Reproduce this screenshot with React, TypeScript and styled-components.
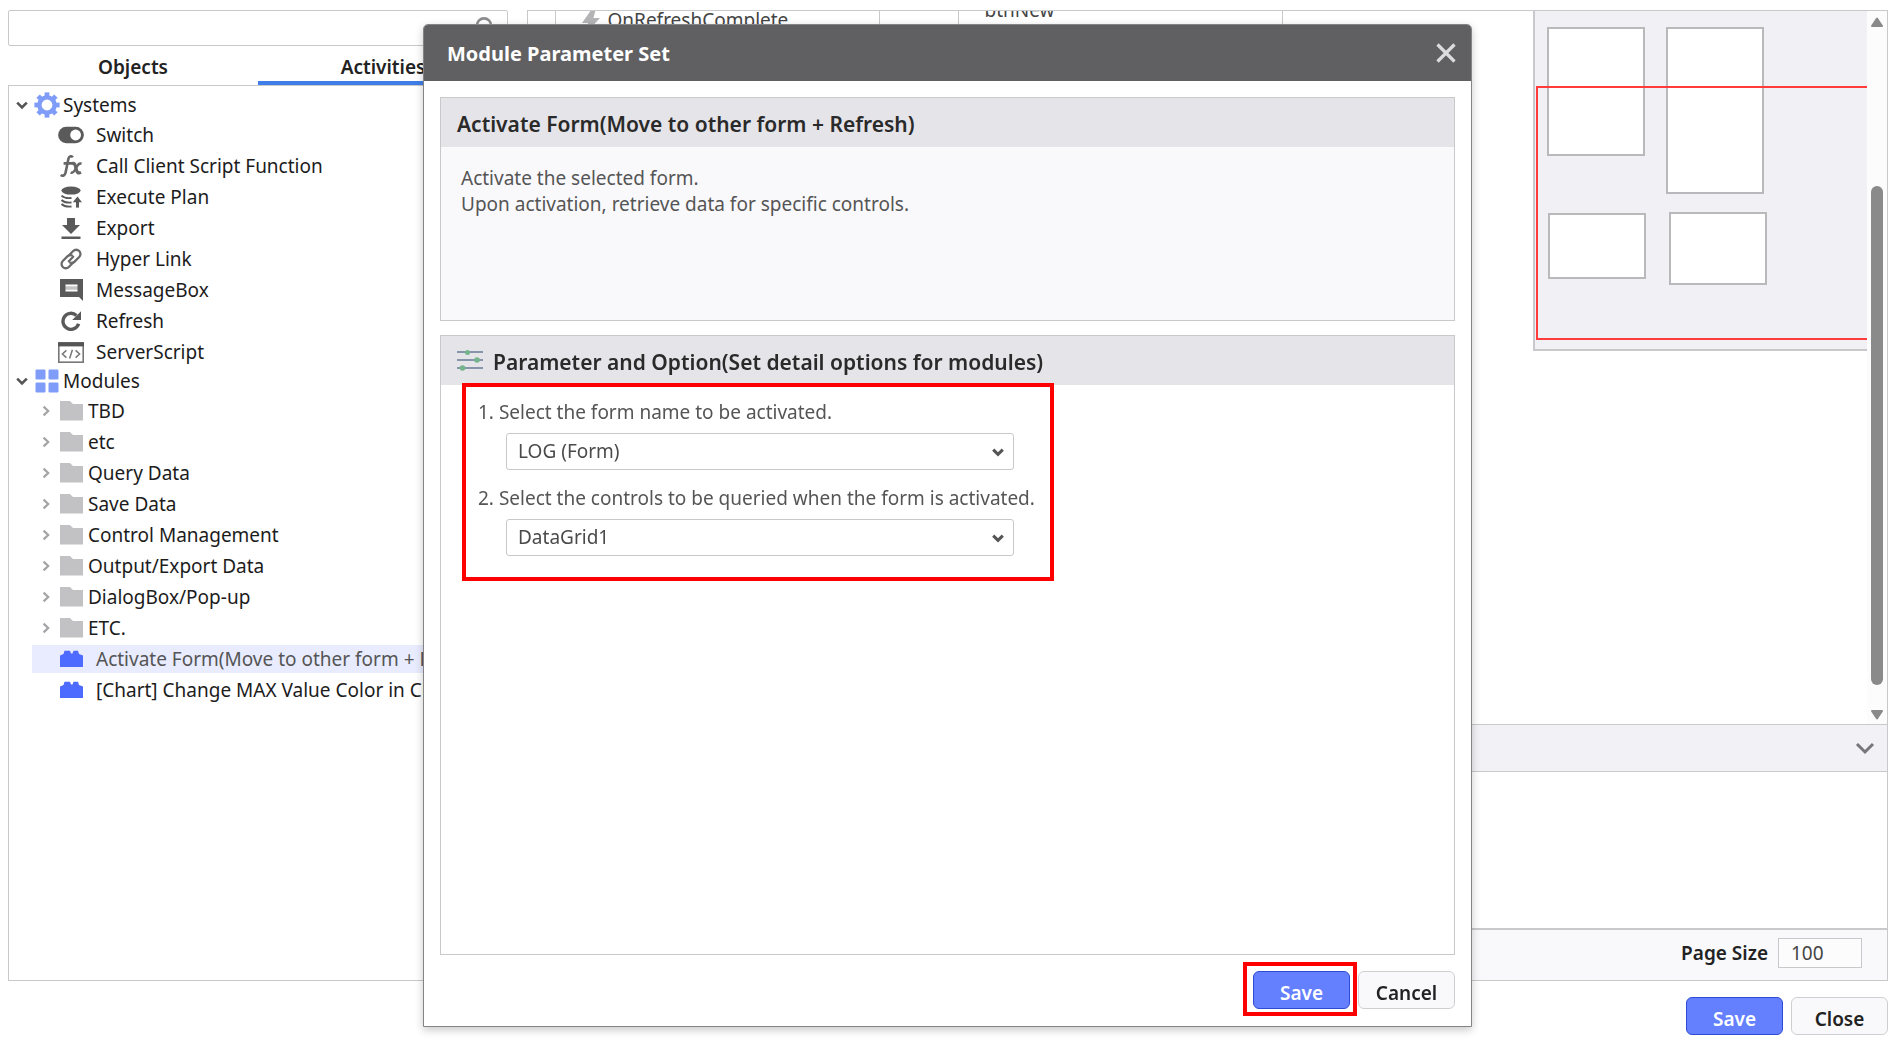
import React, { useState } from 'react';
import styled, { createGlobalStyle } from 'styled-components';

const GlobalStyle = createGlobalStyle`
  *, *::before, *::after { box-sizing: border-box; }
  html, body, #root { height: 100%; }
  body { margin: 0; background: #fff; color: #222; overflow: hidden; }
  body, button, input, select {
    font-family: "Noto Sans", "Noto Sans CJK KR", sans-serif;
    font-size: 19px;
    line-height: 28px;
  }
  button { border: 0; background: none; padding: 0; color: inherit; cursor: pointer; }
  ul { list-style: none; margin: 0; padding: 0; }
  h1, h2, p { margin: 0; }
`;

const line = '#c9c9cb';

/* ---------- page frame ---------- */

const Page = styled.div`
  height: 100vh;
  min-height: 700px;
  padding: 10px 6px 12px 8px;
  display: flex;
  flex-direction: column;
  gap: 16px;
`;

const Columns = styled.div`
  flex: 1;
  min-height: 0;
  display: flex;
  gap: 19px;
`;

const Sidebar = styled.aside`
  width: 500px;
  flex: none;
  display: flex;
  flex-direction: column;
`;

const SearchBox = styled.label`
  height: 36px;
  display: flex;
  align-items: center;
  padding: 0 14px 0 10px;
  border: 1px solid ${line};
  border-radius: 2px;
`;

const SearchInput = styled.input`
  flex: 1;
  min-width: 0;
  border: 0;
  outline: 0;
  background: none;
`;

const TabBar = styled.div`
  height: 39px;
  flex: none;
  display: flex;
`;

const Tab = styled.button<{ $active?: boolean }>`
  flex: 1;
  padding-top: 2px;
  font-weight: 600;
  color: #222;
  border-top: 4px solid transparent;
  border-bottom: 4px solid ${p => (p.$active ? '#3f7ee8' : 'transparent')};
`;

const TreePanel = styled.div`
  flex: 1;
  min-height: 0;
  overflow: hidden;
  border: 1px solid ${line};
  padding-top: 5px;
`;

/* ---------- tree ---------- */

const GroupRow = styled.button`
  width: 100%;
  height: 28px;
  padding-left: 7px;
  display: flex;
  align-items: center;
  color: #1c1c1c;
`;

const ItemLine = styled.li`
  height: 31px;
  padding: 2px 0 1px 23px;
`;

const ItemRow = styled.button<{ $folder?: boolean; $selected?: boolean }>`
  width: 100%;
  height: 28px;
  padding-left: ${p => (p.$folder ? 8 : 26)}px;
  display: flex;
  align-items: center;
  white-space: nowrap;
  color: ${p => (p.$selected ? '#555' : '#1c1c1c')};
  background: ${p => (p.$selected ? '#e8ecfe' : 'transparent')};
`;

const Twisty = styled.span`
  width: 12px;
  margin-right: 6px;
  display: flex;
  justify-content: center;
`;

const IconSlot = styled.span<{ $gap: number }>`
  width: 26px;
  flex: none;
  margin-right: ${p => p.$gap}px;
  display: flex;
  justify-content: center;
`;

/* ---------- workspace ---------- */

const Main = styled.main`
  flex: 1;
  min-width: 0;
  border: 1px solid ${line};
  display: flex;
  flex-direction: column;
`;

const Workspace = styled.section`
  flex: 1;
  min-height: 0;
  display: flex;
  overflow: hidden;
`;

const EventArea = styled.div`
  flex: 1;
  min-width: 0;
`;

const EventTable = styled.table`
  width: 754px;
  margin-top: -16px;
  border-collapse: collapse;
  table-layout: fixed;
  color: #444;
`;

const EventCell = styled.td<{ $width: number }>`
  width: ${p => p.$width}px;
  height: 48px;
  padding: 0 0 0 26px;
  vertical-align: top;
  border: 1px solid ${line};
  border-left-width: 0;
`;

const EventName = styled.span`
  padding-top: 10px;
  display: flex;
  gap: 8px;
`;

const MiniMap = styled.div`
  position: relative;
  width: 334px;
  height: 340px;
  flex: none;
  overflow: hidden;
  background: #f0f0f5;
  border: solid ${line};
  border-width: 0 0 2px 2px;
`;

const MapNode = styled.div<{ $x: number; $y: number; $h: number }>`
  position: absolute;
  left: ${p => p.$x}px;
  top: ${p => p.$y}px;
  width: 98px;
  height: ${p => p.$h}px;
  background: #fff;
  border: 2px solid #b9b9bb;
`;

const MapViewport = styled.div`
  position: absolute;
  left: 1px;
  top: 75px;
  width: 500px;
  height: 254px;
  border: 2px solid #ff3b3b;
`;

const ScrollTrack = styled.div`
  width: 20px;
  flex: none;
  padding: 6px 4px 4px;
  background: #fcfcfc;
  display: flex;
  flex-direction: column;
  align-items: center;
`;

const ScrollThumb = styled.div`
  width: 12px;
  flex: 500;
  border-radius: 6px;
  background: #8a8a8a;
`;

const ScrollSpace = styled.div<{ $grow: number }>`
  flex: ${p => p.$grow};
`;

const ResultBar = styled.div`
  height: 48px;
  flex: none;
  padding-right: 12px;
  display: flex;
  align-items: center;
  justify-content: flex-end;
  background: #f1f1f6;
  border: solid ${line};
  border-width: 1px 0;
`;

const IconButton = styled.button`
  display: flex;
`;

const ResultArea = styled.div`
  height: 156px;
  flex: none;
`;

const Pager = styled.div`
  height: 52px;
  flex: none;
  padding: 0 25px 4px 0;
  display: flex;
  align-items: center;
  justify-content: flex-end;
  gap: 10px;
  background: #f9f9fc;
  border-top: 2px solid ${line};
`;

const PagerLabel = styled.label`
  font-weight: 600;
`;

const PagerInput = styled.input`
  width: 84px;
  height: 30px;
  padding: 0 12px;
  color: #444;
  background: #fcfcfd;
  border: 1px solid ${line};
`;

const Actions = styled.div`
  display: flex;
  justify-content: flex-end;
  gap: 8px;
`;

const Button = styled.button<{ $primary?: boolean }>`
  width: 97px;
  height: 38px;
  padding-top: 6px;
  font-weight: 600;
  border-radius: 6px;
  border: 1px solid ${p => (p.$primary ? '#2f4bd6' : '#cfcfd2')};
  background: ${p => (p.$primary ? '#6480ff' : '#f9f9fc')};
  color: ${p => (p.$primary ? '#fff' : '#222')};
`;

/* ---------- dialog ---------- */

const Overlay = styled.div`
  position: fixed;
  inset: 0;
  padding: 24px 0 20px 1px;
  display: flex;
  justify-content: center;
`;

const Dialog = styled.section`
  width: 1049px;
  display: flex;
  flex-direction: column;
  background: #fff;
  border: 1px solid #848486;
  border-radius: 5px 5px 0 0;
  overflow: hidden;
  box-shadow: 0 3px 8px rgba(0, 0, 0, 0.22);
`;

const DialogHead = styled.header`
  height: 56px;
  flex: none;
  padding: 0 15px 0 23px;
  display: flex;
  align-items: center;
  justify-content: space-between;
  background: #606062;
  color: #fff;
`;

const Title = styled.h1`
  padding-top: 2px;
  font-size: 20px;
  font-weight: 700;
`;

const DialogBody = styled.div`
  flex: 1;
  min-height: 0;
  padding: 16px;
  display: flex;
  flex-direction: column;
  gap: 14px;
`;

const Card = styled.section<{ $fill?: boolean }>`
  border: 1px solid ${line};
  background: ${p => (p.$fill ? '#fff' : '#f9f9fc')};
  ${p => (p.$fill ? 'flex: 1; min-height: 0;' : 'min-height: 224px;')}
`;

const CardHead = styled.header`
  height: 49px;
  padding: 0 16px;
  display: flex;
  align-items: center;
  gap: 10px;
  background: #e5e4e9;
`;

const CardTitle = styled.h2`
  padding-top: 2px;
  font-size: 21px;
  font-weight: 600;
  color: #2a2a2a;
`;

const Description = styled.p`
  padding: 18px 20px;
  line-height: 26px;
  color: #555;
`;

const Options = styled.div`
  width: 592px;
  margin: -2px 0 0 21px;
  padding: 11px 10px 21px 12px;
  display: grid;
  border: 4px solid #fe0000;
`;

const Field = styled.div`
  display: flex;
  flex-direction: column;
  gap: 7px;
  color: #555;

  & + & { margin-top: 14px; }
`;

const SelectWrap = styled.span`
  position: relative;
  width: 508px;
  margin-left: 28px;
  display: block;
`;

const Select = styled.select`
  appearance: none;
  width: 100%;
  height: 37px;
  padding: 0 32px 2px 11px;
  display: block;
  color: #4a4a4a;
  background: #fff;
  border: 1px solid ${line};
  border-radius: 3px;
`;

const SelectArrow = styled.span`
  position: absolute;
  right: 10px;
  top: 13px;
  display: flex;
  pointer-events: none;
`;

const DialogFoot = styled.footer`
  flex: none;
  padding: 0 16px 17px;
  display: flex;
  justify-content: flex-end;
  gap: 8px;
`;

const Highlight = styled.span`
  position: relative;
  display: flex;

  &::after {
    content: '';
    position: absolute;
    inset: -9px -7px -7px -10px;
    border: 4px solid #fe0000;
    pointer-events: none;
  }
`;

/* ---------- icons ---------- */

const Chevron = ({ dir = 'down', size = 12, color = '#555', weight = 2.6 }: { dir?: 'down' | 'right'; size?: number; color?: string; weight?: number }) => (
  <svg width={size} height={size} viewBox="0 0 12 12" fill="none" stroke={color} strokeWidth={weight}>
    <path d={dir === 'down' ? 'M1.2 3.6 6 8.4l4.800-4.800' : 'M3.600 1.600 8.200 6 3.600 10.400'} />
  </svg>
);

const GearIcon = () => (
  <svg width="26" height="26" viewBox="0 0 26 26" fill="none" stroke="#7f9cf8">
    <circle cx="13" cy="13" r="7.600" strokeWidth="4.400" />
    {[0, 45, 90, 135, 180, 225, 270, 315].map(a => (
      <path key={a} d="M13 .4v4" strokeWidth="4.800" transform={`rotate(${a} 13 13)`} />
    ))}
  </svg>
);

const GridIcon = () => (
  <svg width="24" height="24" viewBox="0 0 24 24" fill="#7f9cf8">
    <rect x=".5" y=".5" width="10" height="10" rx="1.200" />
    <rect x="13.500" y=".5" width="10" height="10" rx="1.200" />
    <rect x=".5" y="13.500" width="10" height="10" rx="1.200" />
    <rect x="13.500" y="13.500" width="10" height="10" rx="1.200" />
  </svg>
);

const SwitchIcon = () => (
  <svg width="26" height="18" viewBox="0 0 26 18">
    <rect x=".2" y=".8" width="25.600" height="16.400" rx="8" fill="#5a5a5a" />
    <circle cx="17.600" cy="9" r="5.400" fill="#fff" />
  </svg>
);

const FxIcon = () => (
  <svg width="24" height="24" viewBox="0 0 24 24" fill="none" stroke="#666">
    <path d="M13.800 3.400c-1-1.800-3.700-1.500-4.400 1.400L6.600 18.600c-.6 3-2.900 4-4.900 2.400M4.600 9.400h9" strokeWidth="2.600" />
    <path d="M13 9.600c2.600-.8 3 .6 4 4.800s1.800 5.400 5 4" strokeWidth="3.200" />
    <path d="M22.600 9.600c-3-.8-4 1.400-5.400 4.200-1.400 3-2.800 5.800-5.600 4.800" strokeWidth="2.400" />
  </svg>
);

const PlanIcon = () => (
  <svg width="22" height="22" viewBox="0 0 22 22" fill="none">
    <ellipse cx="11" cy="4.600" rx="9.600" ry="4" fill="#5a5a5a" />
    <path d="M1.500 9.600c2 2 6 2.800 10 2.400M1.500 14c2 2 6 2.900 10 2.500M1.500 18c2 2 6 2.900 10 2.500" stroke="#5a5a5a" strokeWidth="1.900" />
    <path d="M17.500 21.600v-7" stroke="#5a5a5a" strokeWidth="3" />
    <path d="m12.800 16.200 4.700-5.600 4.500 5.600z" fill="#5a5a5a" />
  </svg>
);

const ExportIcon = () => (
  <svg width="20" height="22" viewBox="0 0 20 22" fill="#5a5a5a">
    <path d="M6 1h8v7h5l-9 9-9-9h5zM.5 19.400h19V22H.5z" />
  </svg>
);

const LinkIcon = () => (
  <svg width="24" height="24" viewBox="0 0 24 24" fill="none" stroke="#6a6a6a" strokeWidth="2.300" strokeLinecap="round">
    <path d="M10 8.200l4.200-4.200a4.200 4.200 0 0 1 6 0 4.200 4.200 0 0 1 0 6l-4.600 4.600a4.200 4.200 0 0 1-4.400 1" />
    <path d="M14 15.800 9.800 20a4.200 4.200 0 0 1-6 0 4.200 4.200 0 0 1 0-6l4.600-4.600a4.200 4.200 0 0 1 4.400-1" />
    <path d="m9.800 14.200 4.400-4.400" />
  </svg>
);

const MessageIcon = () => (
  <svg width="23" height="22" viewBox="0 0 23 22">
    <path d="M0 0h23v22l-4-4H0z" fill="#5a5a5a" />
    <path d="M5.500 6.700h12M5.500 11.300h12" stroke="#fff" strokeWidth="2.200" />
    <path d="M5.500 9h12" stroke="#c4c4c4" strokeWidth="2.400" />
  </svg>
);

const RefreshIcon = () => (
  <svg width="20" height="20" viewBox="0 0 20 20" fill="none">
    <path d="M17.600 12.800A8 8 0 1 1 15.400 4.400" stroke="#5a5a5a" strokeWidth="3.400" />
    <path d="M20 .2v8.800h-8.800z" fill="#5a5a5a" />
  </svg>
);

const ScriptIcon = () => (
  <svg width="26" height="21" viewBox="0 0 26 21" fill="none" stroke="#777">
    <rect x=".8" y=".8" width="24.400" height="19.400" strokeWidth="1.600" />
    <path d="M0 2.400h26" strokeWidth="4" stroke="#555" />
    <path d="M8.400 8.400 4.400 12l4 3.600M17.600 8.400l4 3.600-4 3.600M14.400 7.800l-2.800 8.600" strokeWidth="1.500" />
  </svg>
);

const FolderIcon = () => (
  <svg width="23" height="20" viewBox="0 0 23 20" fill="#c2c2c4">
    <path d="M0 0h10l3 3h10v16.500H0z" />
  </svg>
);

const BrickIcon = () => (
  <svg width="23" height="18" viewBox="0 0 23 18" fill="#4d6bfe">
    <path d="M0 5.500 3.500 4 4.500.8h5.500l1 2.700h1.500l1-2.700H18L19 4l4 1.500V17H0z" />
  </svg>
);

const SearchIcon = () => (
  <svg width="22" height="22" viewBox="0 0 22 22" fill="none" stroke="#8c8c8e" strokeWidth="2.600">
    <circle cx="13" cy="8.400" r="7" />
    <path d="m8 13.500-6.500 7" />
  </svg>
);

const BoltIcon = () => (
  <svg width="18" height="28" viewBox="0 0 18 28" fill="#b4b4b6">
    <path d="M10.500 2 0 17h6L3 28l15-16h-6.500L14 2z" />
  </svg>
);

const CloseIcon = () => (
  <svg width="20" height="20" viewBox="0 0 20 20" stroke="#dcdcde" strokeWidth="3.200">
    <path d="m1.500 1.500 17 17M18.500 1.500l-17 17" />
  </svg>
);

const SlidersIcon = () => (
  <svg width="26" height="22" viewBox="0 0 26 22" stroke="#8795ab" strokeWidth="2">
    <path d="M0 2h26M0 10h26M0 18h26" />
    <g fill="#74b58c" stroke="none">
      <circle cx="10.500" cy="2.500" r="2.500" />
      <circle cx="20" cy="10" r="2.800" />
      <circle cx="5.500" cy="18" r="2.800" />
    </g>
  </svg>
);

const ScrollArrow = ({ up }: { up?: boolean }) => (
  <svg width="12" height="11" viewBox="0 0 12 11" fill="#8a8a8a" stroke="#8a8a8a" strokeLinejoin="round" strokeWidth="2">
    <path d={up ? 'M6 1.500 11 9H1z' : 'M6 9.500 11 2H1z'} />
  </svg>
);

/* ---------- data ---------- */

const systemItems = [
  { name: 'Switch', icon: <SwitchIcon /> },
  { name: 'Call Client Script Function', icon: <FxIcon /> },
  { name: 'Execute Plan', icon: <PlanIcon /> },
  { name: 'Export', icon: <ExportIcon /> },
  { name: 'Hyper Link', icon: <LinkIcon /> },
  { name: 'MessageBox', icon: <MessageIcon /> },
  { name: 'Refresh', icon: <RefreshIcon /> },
  { name: 'ServerScript', icon: <ScriptIcon /> },
];

const folders = ['TBD', 'etc', 'Query Data', 'Save Data', 'Control Management', 'Output/Export Data', 'DialogBox/Pop-up', 'ETC.'];

const modules = ['Activate Form(Move to other form + Refresh)', '[Chart] Change MAX Value Color in Chart'];

const mapNodes = [
  { x: 12, y: 16, h: 129 },
  { x: 131, y: 16, h: 167 },
  { x: 13, y: 202, h: 66 },
  { x: 134, y: 201, h: 73 },
];

const TreeGroup = ({ name, icon, children }: { name: string; icon: React.ReactNode; children: React.ReactNode }) => {
  const [open, setOpen] = useState(true);
  return (
    <li>
      <GroupRow aria-expanded={open} onClick={() => setOpen(!open)}>
        <Twisty><Chevron dir={open ? 'down' : 'right'} /></Twisty>
        <IconSlot $gap={3}>{icon}</IconSlot>
        {name}
      </GroupRow>
      {open && <ul>{children}</ul>}
    </li>
  );
};

export default function App() {
  const [tab, setTab] = useState('Activities');
  const [selected, setSelected] = useState(modules[0]);
  const [pageSize, setPageSize] = useState('100');

  return (
    <>
      <GlobalStyle />
      <Page>
        <Columns>
          <Sidebar>
            <SearchBox>
              <SearchInput aria-label="Search" />
              <SearchIcon />
            </SearchBox>
            <TabBar role="tablist">
              {['Objects', 'Activities'].map(t => (
                <Tab key={t} role="tab" aria-selected={t === tab} $active={t === tab} onClick={() => setTab(t)}>{t}</Tab>
              ))}
            </TabBar>
            <TreePanel>
              <ul>
                <TreeGroup name="Systems" icon={<GearIcon />}>
                  {systemItems.map(i => (
                    <ItemLine key={i.name}>
                      <ItemRow $selected={selected === i.name} onClick={() => setSelected(i.name)}>
                        <IconSlot $gap={12}>{i.icon}</IconSlot>
                        {i.name}
                      </ItemRow>
                    </ItemLine>
                  ))}
                </TreeGroup>
                <TreeGroup name="Modules" icon={<GridIcon />}>
                  {folders.map(f => (
                    <ItemLine key={f}>
                      <ItemRow $folder $selected={selected === f} onClick={() => setSelected(f)}>
                        <Twisty><Chevron dir="right" color="#a4a4a6" weight={2.2} /></Twisty>
                        <IconSlot $gap={4}><FolderIcon /></IconSlot>
                        {f}
                      </ItemRow>
                    </ItemLine>
                  ))}
                  {modules.map(m => (
                    <ItemLine key={m}>
                      <ItemRow $selected={selected === m} onClick={() => setSelected(m)}>
                        <IconSlot $gap={12}><BrickIcon /></IconSlot>
                        {m}
                      </ItemRow>
                    </ItemLine>
                  ))}
                </TreeGroup>
              </ul>
            </TreePanel>
          </Sidebar>

          <Main>
            <Workspace>
              <EventArea>
                <EventTable>
                  <tbody>
                    <tr>
                      <EventCell $width={27} />
                      <EventCell $width={324} >
                        <EventName><BoltIcon />OnRefreshComplete</EventName>
                      </EventCell>
                      <EventCell $width={79} />
                      <EventCell $width={324}>btnNew</EventCell>
                    </tr>
                  </tbody>
                </EventTable>
              </EventArea>
              <MiniMap>
                {mapNodes.map(n => <MapNode key={`${n.x}-${n.y}`} $x={n.x} $y={n.y} $h={n.h} />)}
                <MapViewport />
              </MiniMap>
              <ScrollTrack>
                <ScrollArrow up />
                <ScrollSpace $grow={158} />
                <ScrollThumb />
                <ScrollSpace $grow={24} />
                <ScrollArrow />
              </ScrollTrack>
            </Workspace>
            <ResultBar>
              <IconButton aria-label="Collapse results"><Chevron size={20} color="#77777a" weight={1.8} /></IconButton>
            </ResultBar>
            <ResultArea />
            <Pager>
              <PagerLabel htmlFor="page-size">Page Size</PagerLabel>
              <PagerInput id="page-size" value={pageSize} onChange={e => setPageSize(e.target.value)} />
            </Pager>
          </Main>
        </Columns>
        <Actions>
          <Button $primary>Save</Button>
          <Button>Close</Button>
        </Actions>
      </Page>

      <Overlay>
        <Dialog role="dialog" aria-labelledby="dialog-title">
          <DialogHead>
            <Title id="dialog-title">Module Parameter Set</Title>
            <IconButton aria-label="Close dialog"><CloseIcon /></IconButton>
          </DialogHead>
          <DialogBody>
            <Card>
              <CardHead>
                <CardTitle>Activate Form(Move to other form + Refresh)</CardTitle>
              </CardHead>
              <Description>
                Activate the selected form.<br />
                Upon activation, retrieve data for specific controls.
              </Description>
            </Card>
            <Card $fill>
              <CardHead>
                <SlidersIcon />
                <CardTitle>Parameter and Option(Set detail options for modules)</CardTitle>
              </CardHead>
              <Options>
                <Field>
                  <label htmlFor="form-name">1. Select the form name to be activated.</label>
                  <SelectWrap>
                    <Select id="form-name"><option>LOG (Form)</option></Select>
                    <SelectArrow><Chevron weight={3} /></SelectArrow>
                  </SelectWrap>
                </Field>
                <Field>
                  <label htmlFor="controls">2. Select the controls to be queried when the form is activated.</label>
                  <SelectWrap>
                    <Select id="controls"><option>DataGrid1</option></Select>
                    <SelectArrow><Chevron weight={3} /></SelectArrow>
                  </SelectWrap>
                </Field>
              </Options>
            </Card>
          </DialogBody>
          <DialogFoot>
            <Highlight><Button $primary>Save</Button></Highlight>
            <Button>Cancel</Button>
          </DialogFoot>
        </Dialog>
      </Overlay>
    </>
  );
}
